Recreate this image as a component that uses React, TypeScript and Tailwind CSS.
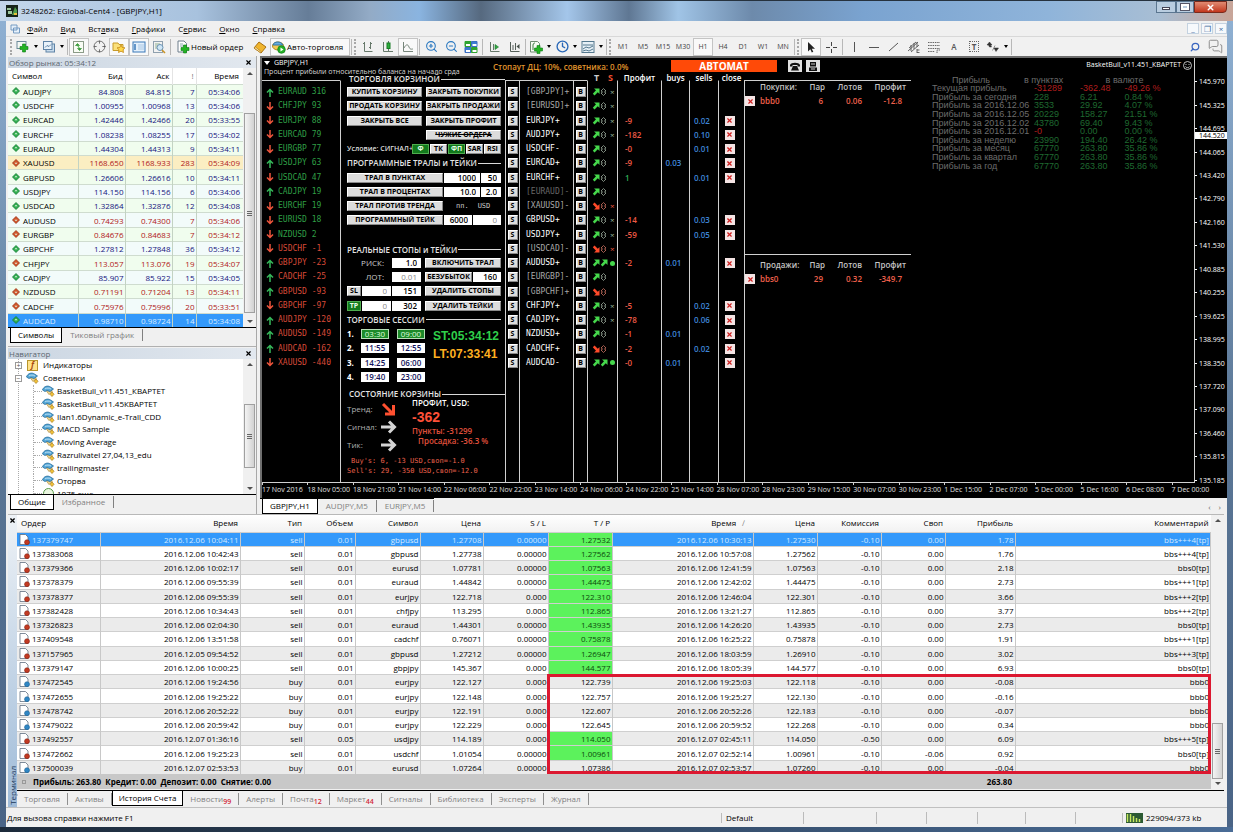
import React from 'react';
import { Search, MessagesSquare, ZoomIn, ZoomOut, Crosshair, Clock, X } from 'lucide-react';

const quotes = [
  ['AUDJPY', '84.808', '84.815', '7', '05:34:06', 'up'],
  ['USDCHF', '1.00955', '1.00968', '13', '05:34:06', 'up'],
  ['EURCAD', '1.42446', '1.42466', '20', '05:33:55', 'up'],
  ['EURCHF', '1.08238', '1.08255', '17', '05:34:02', 'up'],
  ['EURAUD', '1.44304', '1.44313', '9', '05:34:11', 'up'],
  ['XAUUSD', '1168.650', '1168.933', '283', '05:34:09', 'down'],
  ['GBPUSD', '1.26606', '1.26616', '10', '05:34:11', 'up'],
  ['USDJPY', '114.150', '114.156', '6', '05:34:06', 'up'],
  ['USDCAD', '1.32864', '1.32876', '12', '05:34:08', 'up'],
  ['AUDUSD', '0.74293', '0.74300', '7', '05:34:06', 'down'],
  ['EURGBP', '0.84676', '0.84683', '7', '05:34:12', 'down'],
  ['GBPCHF', '1.27812', '1.27848', '36', '05:34:12', 'up'],
  ['CHFJPY', '113.057', '113.076', '19', '05:34:07', 'down'],
  ['CADJPY', '85.907', '85.922', '15', '05:34:05', 'up'],
  ['NZDUSD', '0.71191', '0.71204', '13', '05:34:11', 'down'],
  ['CADCHF', '0.75976', '0.75996', '20', '05:33:51', 'down'],
  ['AUDCAD', '0.98710', '0.98724', '14', '05:34:08', 'up'],
];

const experts = [
  'BasketBull_v11.451_КВАРТЕТ',
  'BasketBull_v11.45КВАРТЕТ',
  'Ilan1.6Dynamic_e-Trall_CDD',
  'MACD Sample',
  'Moving Average',
  'Razrulivatel 27,04,13_edu',
  'trailingmaster',
  'Оторва',
];

const strength: [string, number, boolean][] = [
  ['EURAUD', 316, true],
  ['CHFJPY', 93, false],
  ['EURJPY', 88, false],
  ['EURCAD', 79, false],
  ['EURGBP', 77, false],
  ['USDJPY', 63, true],
  ['USDCAD', 47, false],
  ['CADJPY', 19, true],
  ['EURCHF', 19, false],
  ['EURUSD', 18, false],
  ['NZDUSD', 2, false],
  ['USDCHF', -1, false],
  ['GBPJPY', -23, true],
  ['CADCHF', -25, true],
  ['GBPUSD', -93, true],
  ['GBPCHF', -97, false],
  ['AUDJPY', -120, true],
  ['AUDUSD', -149, true],
  ['AUDCAD', -162, true],
  ['XAUUSD', -440, false],
];

interface Pair {
  name: string;
  up: boolean;
  sign?: 'x' | 'dot';
  profit?: string;
  buys?: string;
  sells?: string;
}

const pairs: Pair[] = [
  { name: '[GBPJPY]+', up: true, sign: 'x' },
  { name: '[EURUSD]+', up: true, sign: 'x' },
  { name: 'EURJPY+', up: true, sign: 'x', profit: '-9', sells: '0.02' },
  { name: 'AUDJPY+', up: true, sign: 'x', profit: '-182', sells: '0.10' },
  { name: 'USDCHF-', up: true, profit: '-0', sells: '0.01' },
  { name: 'EURCAD+', up: true, profit: '-9', buys: '0.03' },
  { name: 'EURCHF+', up: true, profit: '1', sells: '0.01' },
  { name: '[EURAUD]-', up: true },
  { name: '[XAUUSD]-', up: false, sign: 'x' },
  { name: 'GBPUSD+', up: true, sign: 'x', profit: '-14', sells: '0.03' },
  { name: 'USDJPY+', up: true, sign: 'x', profit: '-59', sells: '0.05' },
  { name: '[USDCAD]-', up: false, sign: 'x' },
  { name: 'AUDUSD+', up: true, sign: 'dot', profit: '-2', buys: '0.01' },
  { name: '[EURGBP]-', up: true },
  { name: '[GBPCHF]+', up: false },
  { name: 'CHFJPY+', up: true, sign: 'x', profit: '-5', sells: '0.02' },
  { name: 'CADJPY+', up: true, sign: 'x', profit: '-78', sells: '0.06' },
  { name: 'NZDUSD+', up: true, profit: '-1', buys: '0.01' },
  { name: 'CADCHF+', up: false, profit: '-2', sells: '0.02' },
  { name: 'AUDCAD-', up: true, sign: 'dot', profit: '-0', buys: '0.01' },
];

const profitRows = [
  ['Текущая прибыль', '-31289', '-362.48', '-49.26 %'],
  ['Прибыль за сегодня', '228', '6.21', '0.84 %'],
  ['Прибыль за 2016.12.06', '3533', '29.92', '4.07 %'],
  ['Прибыль за 2016.12.05', '20229', '158.27', '21.51 %'],
  ['Прибыль за 2016.12.02', '43780', '69.40', '9.43 %'],
  ['Прибыль за 2016.12.01', '-0', '0.00', '0.00 %'],
  ['Прибыль за неделю', '23990', '194.40', '26.42 %'],
  ['Прибыль за месяц', '67770', '263.80', '35.86 %'],
  ['Прибыль за квартал', '67770', '263.80', '35.86 %'],
  ['Прибыль за год', '67770', '263.80', '35.86 %'],
];

const prices = [
  '145.970', '145.325', '144.695', '144.065', '143.420', '142.790', '142.160', '141.530', '140.885',
  '140.255', '139.625', '138.995', '138.350', '137.720', '137.090', '136.460', '135.815', '135.185',
];

const times = [
  '17 Nov 2016', '18 Nov 05:00', '18 Nov 21:00', '21 Nov 14:00', '22 Nov 06:00', '22 Nov 22:00', '23 Nov 14:00',
  '24 Nov 06:00', '24 Nov 22:00', '25 Nov 14:00', '28 Nov 07:00', '28 Nov 23:00', '29 Nov 15:00', '30 Nov 07:00',
  '30 Nov 23:00', '1 Dec 15:00', '2 Dec 07:00', '5 Dec 00:00', '5 Dec 16:00', '6 Dec 08:00', '7 Dec 00:00',
];

// order, opened, type, lots, symbol, price, s/l, t/p, closed, price, commission, swap, profit, comment
const orders = [
  ['137379747', '2016.12.06 10:04:11', 'sell', '0.01', 'gbpusd', '1.27708', '0.00000', '1.27532', '2016.12.06 10:30:13', '1.27530', '-0.10', '0.00', '1.78', 'bbs+++4[tp]'],
  ['137383068', '2016.12.06 10:42:43', 'sell', '0.01', 'gbpusd', '1.27738', '0.00000', '1.27562', '2016.12.06 10:57:08', '1.27562', '-0.10', '0.00', '1.76', 'bbs+++4[tp]'],
  ['137379366', '2016.12.06 10:02:17', 'sell', '0.01', 'eurusd', '1.07781', '0.00000', '1.07563', '2016.12.06 12:41:59', '1.07563', '-0.10', '0.00', '2.18', 'bbs0[tp]'],
  ['137378379', '2016.12.06 09:55:39', 'sell', '0.01', 'euraud', '1.44842', '0.00000', '1.44475', '2016.12.06 12:42:02', '1.44475', '-0.10', '0.00', '2.73', 'bbs+++1[tp]'],
  ['137378377', '2016.12.06 09:55:39', 'sell', '0.01', 'eurjpy', '122.718', '0.000', '122.310', '2016.12.06 12:46:04', '122.301', '-0.10', '0.00', '3.66', 'bbs+++2[tp]'],
  ['137382428', '2016.12.06 10:34:43', 'sell', '0.01', 'chfjpy', '113.295', '0.000', '112.865', '2016.12.06 13:21:27', '112.865', '-0.10', '0.00', '3.77', 'bbs+++2[tp]'],
  ['137326823', '2016.12.06 02:04:30', 'sell', '0.01', 'euraud', '1.44301', '0.00000', '1.43935', '2016.12.06 14:26:20', '1.43935', '-0.10', '0.00', '2.73', 'bbs0[tp]'],
  ['137409548', '2016.12.06 13:51:58', 'sell', '0.01', 'cadchf', '0.76071', '0.00000', '0.75878', '2016.12.06 16:25:22', '0.75878', '-0.10', '0.00', '1.91', 'bbs+++1[tp]'],
  ['137157965', '2016.12.05 09:54:52', 'sell', '0.01', 'gbpusd', '1.27212', '0.00000', '1.26947', '2016.12.06 18:03:59', '1.26910', '-0.10', '0.00', '3.02', 'bbs+++3[tp]'],
  ['137379147', '2016.12.06 10:00:25', 'sell', '0.01', 'gbpjpy', '145.367', '0.000', '144.577', '2016.12.06 18:05:39', '144.577', '-0.10', '0.00', '6.93', 'bbs0[tp]'],
  ['137472545', '2016.12.06 19:24:56', 'buy', '0.01', 'eurjpy', '122.127', '0.000', '122.739', '2016.12.06 19:25:03', '122.118', '-0.10', '0.00', '-0.08', 'bbb0'],
  ['137472655', '2016.12.06 19:25:22', 'buy', '0.01', 'eurjpy', '122.148', '0.000', '122.757', '2016.12.06 19:25:27', '122.130', '-0.10', '0.00', '-0.16', 'bbb0'],
  ['137478742', '2016.12.06 20:52:22', 'buy', '0.01', 'eurjpy', '122.191', '0.000', '122.607', '2016.12.06 20:52:26', '122.183', '-0.10', '0.00', '-0.07', 'bbb0'],
  ['137479022', '2016.12.06 20:59:42', 'buy', '0.01', 'eurjpy', '122.229', '0.000', '122.645', '2016.12.06 20:59:52', '122.268', '-0.10', '0.00', '0.34', 'bbb0'],
  ['137492557', '2016.12.07 01:36:16', 'sell', '0.05', 'usdjpy', '114.189', '0.000', '114.050', '2016.12.07 02:45:11', '114.050', '-0.50', '0.00', '6.09', 'bbs+++5[tp]'],
  ['137472662', '2016.12.06 19:25:23', 'sell', '0.01', 'usdchf', '1.01054', '0.00000', '1.00961', '2016.12.07 02:52:14', '1.00961', '-0.10', '-0.06', '0.92', 'bbs0[tp]'],
  ['137500039', '2016.12.07 02:53:53', 'buy', '0.01', 'eurusd', '1.07264', '0.00000', '1.07386', '2016.12.07 02:53:57', '1.07260', '-0.10', '0.00', '-0.04', 'bbb0'],
];

const orderColumns: [string, string][] = [
  ['Ордер', 'w-[83px]'],
  ['Время', 'w-[140px]'],
  ['Тип', 'w-[64px]'],
  ['Объем', 'w-[51px]'],
  ['Символ', 'w-[65px]'],
  ['Цена', 'w-[63px]'],
  ['S / L', 'w-[65px]'],
  ['T / P', 'w-[64px]'],
  ['Время', 'w-[141px]'],
  ['Цена', 'w-[64px]'],
  ['Комиссия', 'w-[64px]'],
  ['Своп', 'w-[64px]'],
  ['Прибыль', 'w-[70px]'],
  ['Комментарий', ''],
];

/* ---------- small drawings ---------- */

const Plus = ({ x = 6, y = 6 }) => (
  <path d={`M${x + 2.5} ${y}h3v2.5h2.5v3h-2.5v2.5h-3v-2.5h-2.5v-3h2.5z`} fill="#22b422" stroke="#0c7a14" strokeWidth=".6" />
);

const Glyph: React.FC<{ name: string }> = ({ name }) => (
  <svg width="14" height="14" viewBox="0 0 14 14" fill="none" stroke="#444" strokeWidth="1" className="shrink-0">
    {name === 'newchart' && (
      <>
        <rect x="1" y="1.5" width="9" height="7" fill="#f4f8f4" stroke="#6c8a9a" />
        <Plus x={4} y={4} />
      </>
    )}
    {name === 'profiles' && (
      <>
        <rect x="4" y="4" width="8.5" height="8" fill="#c9dcec" stroke="#5f83a6" />
        <rect x="1.5" y="1.5" width="8.5" height="8" fill="#e9f2fa" stroke="#5f83a6" />
        <path d="M3 7.5l2-2 2 1 2-2" stroke="#5f83a6" />
      </>
    )}
    {name === 'watch' && (
      <>
        <rect x="1.5" y="1.5" width="10" height="11" fill="#f8fcf4" stroke="#8b9b88" />
        <path d="M3.500 5.500l2-2 2 2zM5.500 8.500l2 2 2-2z" fill="#35a235" stroke="#2a8a2a" strokeWidth=".6" />
        <path d="M5.500 5.500l2.500 3.500" stroke="#35a235" />
      </>
    )}
    {name === 'star' && (
      <>
        <path d="M1 3h5l1 1.500h4v6H1z" fill="#fbe07a" stroke="#c79a2a" />
        <path d="M9 5l1.200 2.500 2.800.3-2 1.900.5 2.800L9 11.200l-2.500 1.300.5-2.800-2-1.900 2.800-.3z" fill="#ffd84a" stroke="#c58a1a" strokeWidth=".8" />
      </>
    )}
    {name === 'terminal' && (
      <>
        <rect x="1" y="2" width="12" height="10" fill="#e4f0fb" stroke="#3a78b8" />
        <path d="M3 4v6" stroke="#3a78b8" strokeWidth="1.500" />
        <path d="M6 5h6M6 7h6M6 9h6" stroke="#a8c6e4" />
      </>
    )}
    {name === 'tester' && (
      <>
        <rect x="1.500" y="1.500" width="9" height="11" fill="#f2f2f2" stroke="#8fa0ae" />
        <path d="M3 4h5M3 6h3M3 8h3" stroke="#90b090" />
        <circle cx="8" cy="7.500" r="3" fill="#cfe6f6" stroke="#6a92b4" />
        <path d="M10 10l3 3" stroke="#c99326" strokeWidth="1.600" />
      </>
    )}
    {name === 'order' && (
      <>
        <path d="M2 1h6l2.500 2.500V12H2z" fill="#fff" stroke="#6f7f8c" />
        <path d="M4 4h3M4 6h4" stroke="#8aa" />
        <Plus x={5} y={5} />
      </>
    )}
    {name === 'book' && (
      <>
        <path d="M1 8l5-6 7 5-5 6z" fill="#f0b52d" stroke="#a8700f" />
        <path d="M1 8l7 5v-1.500L2.500 7z" fill="#fbe6a8" stroke="#a8700f" strokeWidth=".6" />
      </>
    )}
    {name === 'auto' && (
      <>
        <ellipse cx="6" cy="6" rx="5.500" ry="4" fill="#f3c952" stroke="#ae8a22" />
        <path d="M1 5c1-4 8-4 10 0z" fill="#69aee0" stroke="#2f77ad" />
        <circle cx="9.500" cy="9.500" r="3.800" fill="#25b125" stroke="#0d7d15" strokeWidth=".7" />
        <path d="M8.500 7.500l3 2-3 2z" fill="#fff" stroke="none" />
      </>
    )}
    {name === 'bars' && <path d="M3.500 2v9.500h8M2 3.500h1.500M9.500 2v7M8 7.500h1.500M9.500 3.500H11" stroke="#66786a" />}
    {name === 'candles' && (
      <>
        <path d="M2.500 2v9.500h9.500M7.500 1v10" stroke="#66786a" />
        <rect x="6" y="3" width="3" height="5.500" fill="#2eae3c" stroke="#177d25" />
      </>
    )}
    {name === 'line' && <path d="M2.500 2v9.500h9.500M3 8c2-4 4-4 5-1s3 2 4 2" stroke="#76857a" />}
    {name === 'tile' && (
      <>
        <path d="M1 1.500h6v5H1z" fill="#2ea32e" stroke="#2ea32e" />
        <path d="M7.500 1.500h5.500v5H7.500zM1 7.500h6v5H1z" fill="#3b7cd0" stroke="#3b6cc0" />
        <path d="M7.500 7.500h5.500v5H7.500z" fill="#2ea32e" stroke="#2ea32e" />
        <path d="M2 4h4v2H2zM8.500 4h4v2h-4zM2 10h4v2H2zM8.500 10h4v2h-4z" fill="#fff" stroke="none" />
      </>
    )}
    {name === 'scroll' && (
      <>
        <path d="M3.500 2v9.500h9M6.500 4v6" stroke="#66786a" />
        <path d="M8 4.500l3.500 2.500L8 9.500z" fill="#35a845" stroke="#1a7a2a" strokeWidth=".6" />
      </>
    )}
    {name === 'shift' && (
      <>
        <path d="M3.500 2v9.500h9M8.500 3v7M6 5v5" stroke="#545f58" />
        <path d="M12.500 4v5L9.500 6.500z" fill="#444f48" stroke="none" />
      </>
    )}
    {name === 'indicator' && (
      <>
        <path d="M1.500 1.500h7l2 2V12h-9z" fill="#f6fbf4" stroke="#6d8b70" />
        <path d="M4 10V5c0-2 2-2 2-2" stroke="#3a7a3f" />
        <Plus x={5.5} y={5.5} />
      </>
    )}
    {name === 'template' && (
      <>
        <rect x="1" y="1.500" width="12" height="11" fill="#e6f0f6" stroke="#54788e" />
        <path d="M2 5h10M2 9l3-2 3 1 4-2M2 11l3-1 3 1 4-2" stroke="#54788e" />
      </>
    )}
    {name === 'cursor' && <path d="M4 2v9.500l2.300-2.200 1.500 3.200 1.500-.7-1.500-3.100H11z" fill="#222" stroke="none" />}
    {name === 'cross' && <path d="M7.500 2v4M7.500 9v4M2 7.500h4M9 7.500h4" stroke="#444" />}
    {name === 'vline' && <path d="M7.500 2v10" stroke="#555" />}
    {name === 'hline' && <path d="M2 7.500h10" stroke="#555" />}
    {name === 'trend' && <path d="M2 11l9-8" stroke="#555" />}
    {name === 'channel' && <path d="M1 11l10-9M2 8l7-6M4 12l8-7M4 5v6M7 3v6M10 2v5M10 10h2.500M10 12.500h2.500M10 9v4" stroke="#555" strokeWidth=".9" />}
    {name === 'fibo' && <path d="M1 2.500h12M1 5.500h12M1 8.500h12M1 11.500h7M10 13v-3h3" stroke="#666" strokeDasharray="1.500 .8" />}
    {name === 'arrows' && (
      <path d="M1 5l2.500-3L6 5H4.500l1 2h-2l-1-2zM8 8h4.500L10 11.500zM6.500 10.500l2.500-5" fill="#333" stroke="#333" strokeWidth=".5" />
    )}
  </svg>
);

const Logo = () => (
  <svg width="12" height="12" viewBox="0 0 12 12" className="shrink-0">
    <rect width="12" height="12" fill="#16241a" />
    <path d="M1 3h4v2H1zM2 6h4v3H2z" fill="#9ec79e" />
    <path d="M6 10l3-8 2 3v5z" fill="#4f9c4a" />
    <path d="M8 8h3v2H8z" fill="#e8c23c" />
  </svg>
);

const QuoteArrow = ({ up }: { up: boolean }) => (
  <svg width="8" height="8" viewBox="0 0 8 8" className="shrink-0">
    <path d="M4 .5L7.500 4 4 7.500.5 4z" fill={up ? '#2fae4f' : '#d2542a'} stroke={up ? '#117a30' : '#9a3010'} strokeWidth=".8" />
    <path d={up ? 'M4 2.800l1.500 1.500h-3z' : 'M4 5.200l1.500-1.500h-3z'} fill="#dff5df" />
  </svg>
);

const ExpertIcon = () => (
  <svg width="13" height="12" viewBox="0 0 13 12" className="shrink-0">
    <path d="M4 5.500l3 4 3.500-3.500z" fill="#f0d48c" stroke="#a98530" strokeWidth=".6" />
    <path d="M.5 5C1.500 1.500 5.500 0 8.500 2L11.500 4l-3.500 2.500-3-1L3 6.500z" fill="#58a9d8" stroke="#246c9c" strokeWidth=".8" />
    <path d="M3 3.800c2-1 4-1 6 .2" stroke="#cfe8f8" strokeWidth=".8" fill="none" />
    <path d="M10 7l2 2.300-2 2.200-2-2.200z" fill="#f2c338" stroke="#a57714" strokeWidth=".7" />
  </svg>
);

const DocIcon = ({ sell }: { sell: boolean }) => (
  <svg width="11" height="11" viewBox="0 0 11 11" className="shrink-0">
    <path d="M1 .5h5.500L9 3v7.500H1z" fill="#fff" stroke="#5f6f80" strokeWidth=".8" />
    <circle cx="8" cy="8.200" r="2.500" fill={sell ? '#c23a22' : '#2f86c4'} stroke={sell ? '#7c1c0e' : '#175a8c'} strokeWidth=".5" />
  </svg>
);

const StrengthArrow = ({ up }: { up: boolean }) => (
  <svg width="8" height="9" viewBox="0 0 8 9" fill="none" strokeWidth="1.500" className="shrink-0">
    {up ? <path d="M4 9V1.500M1 4.500l3-3 3 3" stroke="#36b85a" /> : <path d="M4 0v7.500M1 4.500l3 3 3-3" stroke="#f0553c" />}
  </svg>
);

const TrendArrow = ({ up }: { up: boolean }) => (
  <svg width="8" height="8" viewBox="0 0 8 8" className="shrink-0">
    {up ? <path d="M2 .5h5.500V6L5.800 4.300 2.500 7.500.8 5.800 4 2.300z" fill="#46d84c" /> : <path d="M2 7.500h5.500V2L5.800 3.700 2.500.5.8 2.200 4 5.700z" fill="#ff4a2a" />}
  </svg>
);

const BlockArrow = ({ color, down }: { color: string; down?: boolean }) => (
  <svg width="16" height="16" viewBox="0 0 16 16" fill="none" stroke={color} strokeWidth="3">
    {down ? <path d="M2 3l9 9M12.500 4v9H4" /> : <path d="M0 8h13M8 2.500L13.500 8 8 13.500" />}
  </svg>
);

/* ---------- shared controls ---------- */

const Sep = () => <span className="mx-px h-4 w-px shrink-0 bg-[#b8b8b8]" />;

const Grip = () => <span className="mx-px h-4 w-[3px] shrink-0 border-l-2 border-dotted border-[#a8a8a8]" />;

const Tool: React.FC<{ label: string; active?: boolean; caret?: boolean; children: React.ReactNode }> = ({ label, active, caret, children }) => (
  <button
    aria-label={label}
    className={`flex h-[18px] shrink-0 items-center justify-center ${caret ? 'w-[26px] gap-1' : 'w-5'} ${active ? 'border border-[#c4c4c4] bg-[#f9f9f9]' : ''}`}
  >
    {children}
    {caret && <span className="border-x-[2px] border-t-[3px] border-x-transparent border-t-black" />}
  </button>
);

const PanelTitle = ({ children }: { children: React.ReactNode }) => (
  <div className="flex h-[11px] items-center justify-between bg-linear-to-r from-[#cbd6e2] to-[#e2e8ef] pr-1 pl-px text-[#5c6670]">
    <h2>{children}</h2>
    <button aria-label="Закрыть" className="text-black">
      <X size={7} strokeWidth={4} />
    </button>
  </div>
);

const ScrollBar = ({ thumb }: { thumb: string }) => (
  <div className="flex w-[13px] shrink-0 flex-col items-center bg-[#f0f0f0]">
    <span className="mt-1 border-x-[3px] border-b-[3px] border-x-transparent border-b-[#505050]" />
    <span className={`flex w-[11px] flex-col items-center justify-center gap-px border border-[#a0a0a0] bg-linear-to-r from-[#f4f4f4] to-[#d2d2d2] ${thumb}`}>
      <i className="h-px w-[5px] bg-[#666]" />
      <i className="h-px w-[5px] bg-[#666]" />
      <i className="h-px w-[5px] bg-[#666]" />
    </span>
    <span className="mt-auto mb-1 border-x-[3px] border-t-[3px] border-x-transparent border-t-[#505050]" />
  </div>
);

const Tabs: React.FC<{ items: string[]; active: number }> = ({ items, active }) => (
  <div className="flex h-4 items-start border-t border-black text-[#808080]">
    {items.map((item, i) => (
      <button
        key={item}
        className={i === active ? 'ml-0.5 h-[15px] border-x border-b border-black bg-white px-[7px] text-black' : 'mt-px h-3 border-r border-[#808080] px-2'}
      >
        {item}
      </button>
    ))}
  </div>
);

const Key: React.FC<{ children: React.ReactNode; on?: boolean; className?: string }> = ({ children, on, className = '' }) => (
  <button
    className={`flex h-2.5 items-center justify-center overflow-hidden border text-[7px] leading-[8px] font-bold whitespace-nowrap ${
      on ? 'border-[#4fae4f] bg-[#127a1c] text-[#e8ffe8]' : 'border-t-white border-r-[#8a8a8a] border-b-[#8a8a8a] border-l-white bg-[#dcdcdc] text-black'
    } ${className}`}
  >
    {children}
  </button>
);

const fieldTones = {
  black: 'bg-white px-1 text-right font-semibold text-black',
  grey: 'bg-white px-1 text-right text-[#888]',
  navy: 'bg-white text-center font-semibold text-[#14145c]',
  green: 'border border-[#b8e0b8] bg-[#1d8a2a] text-center text-[#dfffdf]',
};

const Field: React.FC<{ label: string; value: string; tone?: keyof typeof fieldTones; className: string }> = ({ label, value, tone = 'black', className }) => (
  <input aria-label={label} defaultValue={value} className={`h-2.5 min-w-0 text-[8px] leading-[10px] ${fieldTones[tone]} ${className}`} />
);

const SectionTitle = ({ children }: { children: React.ReactNode }) => (
  <h3 className="flex h-3 items-center gap-px text-[8px] font-semibold whitespace-nowrap text-[#e4e4e4]">
    {children}
    <span className="h-px flex-1 bg-[#d8d8d8]" />
  </h3>
);

const Column: React.FC<{ title?: string; className: string; children: React.ReactNode }> = ({ title, className, children }) => (
  <div className={`shrink-0 border-t border-l border-l-[#d0d0d0] ${className}`}>
    <h3 className="-mt-2 flex h-3 justify-center font-semibold whitespace-nowrap">
      {title && <span className="bg-black px-px">{title}</span>}
    </h3>
    <div className="grid h-[285px] grid-rows-[repeat(20,1fr)] items-center justify-items-center">{children}</div>
  </div>
);

const CloseKey = () => (
  <button aria-label="Закрыть" className="flex size-2.5 items-center justify-center bg-[#f4e4e4] text-[#d02020]">
    <X size={7} strokeWidth={4} />
  </button>
);

/* ---------- window parts ---------- */

const TitleBar = () => (
  <header className="flex h-[21px] items-center border-t border-[#26323e] bg-linear-[90deg,#c3d6ea_0%,#a8c2de_16%,#667d98_25%,#93abc6_30%,#8ab4e0_34%,#56697f_39%,#a4c6ea_46%,#5f7793_51%,#a0c4e6_55%,#6d8aab_61%,#7aa3d0_70%,#8fb4da_85%,#a8bed4_94%,#c8a598_100%] pl-1.5">
    <Logo />
    <h1 className="ml-[3px] text-black">3248262: EGlobal-Cent4 - [GBPJPY,H1]</h1>
    <div className="mr-1.5 ml-auto flex h-3 self-start">
      <button aria-label="Свернуть" className="flex w-5 items-end justify-center border border-[#5b7690] bg-[#b9cde0] pb-0.5">
        <i className="h-[3px] w-2 border border-[#445] bg-white" />
      </button>
      <button aria-label="Развернуть" className="flex w-[18px] items-center justify-center border border-[#5b7690] bg-[#b9cde0]">
        <i className="h-[6px] w-2 border-2 border-white outline outline-[#556]" />
      </button>
      <button aria-label="Закрыть окно" className="flex w-[33px] items-center justify-center rounded-br border border-[#7a2a1c] bg-linear-to-b from-[#e08a72] to-[#c2341a] text-white">
        <X size={9} strokeWidth={4} />
      </button>
    </div>
  </header>
);

const MenuBar = () => (
  <nav className="flex h-[15px] items-center gap-[13px] bg-[#f0f0f0] pl-1">
    <svg width="10" height="10" viewBox="0 0 10 10" fill="#e6f0fa" stroke="#6a92bc" strokeWidth=".9">
      <path d="M1 1h6v5H1zM3.500 4h6v5h-6z" />
    </svg>
    {['Файл', 'Вид', 'Вставка', 'Графики', 'Сервис', 'Окно', 'Справка'].map((item, i) => (
      <button key={item} className={i === 0 ? '-ml-1.5' : ''}>
        {item === 'Вставка' || item === 'Сервис' ? (
          <>{item.slice(0, item === 'Вставка' ? 3 : 1)}<u>{item === 'Вставка' ? 'а' : 'е'}</u>{item.slice(item === 'Вставка' ? 4 : 2)}</>
        ) : (
          <><u>{item[0]}</u>{item.slice(1)}</>
        )}
      </button>
    ))}
    <div className="ml-auto flex h-[11px] gap-0.5 text-[#3a6a9c]">
      {['_', '❐', '×'].map((sign) => (
        <button key={sign} aria-label={sign} className="flex w-3 items-center justify-center border border-[#c4d2e0] bg-[#f6f9fc] text-[8px] leading-none">
          {sign}
        </button>
      ))}
    </div>
  </nav>
);

const Toolbar = () => (
  <div className="flex h-5 items-center border-t border-[#d8d8d8] bg-[#f1f1f1] pl-[3px]">
    <Grip />
    <Tool label="Новый график" caret><Glyph name="newchart" /></Tool>
    <Tool label="Профили" caret><Glyph name="profiles" /></Tool>
    <Sep />
    <Tool label="Обзор рынка" active><Glyph name="watch" /></Tool>
    <Tool label="Окно данных"><Crosshair size={13} strokeWidth={1.5} color="#555" /></Tool>
    <Tool label="Навигатор" active><Glyph name="star" /></Tool>
    <Tool label="Терминал" active><Glyph name="terminal" /></Tool>
    <Tool label="Тестер"><Glyph name="tester" /></Tool>
    <Sep />
    <button className="mx-1 flex h-[18px] w-[70px] items-center gap-px whitespace-nowrap">
      <Glyph name="order" />
      Новый ордер
    </button>
    <Tool label="Редактор"><Glyph name="book" /></Tool>
    <button className="flex h-[18px] w-20 items-center gap-px border border-[#c4c4c4] bg-[#f9f9f9] pl-px whitespace-nowrap">
      <Glyph name="auto" />
      Авто-торговля
    </button>
    <Sep />
    <Grip />
    <Tool label="Бары"><Glyph name="bars" /></Tool>
    <Tool label="Свечи"><Glyph name="candles" /></Tool>
    <Tool label="Линия" active><Glyph name="line" /></Tool>
    <Sep />
    <Tool label="Приблизить"><ZoomIn size={13} color="#2a78c0" /></Tool>
    <Tool label="Отдалить"><ZoomOut size={13} color="#2a78c0" /></Tool>
    <Tool label="Расположить окна"><Glyph name="tile" /></Tool>
    <Sep />
    <Tool label="Автопрокрутка"><Glyph name="scroll" /></Tool>
    <Tool label="Сдвиг графика"><Glyph name="shift" /></Tool>
    <Sep />
    <Tool label="Индикаторы" caret><Glyph name="indicator" /></Tool>
    <Tool label="Периоды" caret><Clock size={13} strokeWidth={2.5} color="#2a68b8" /></Tool>
    <Tool label="Шаблоны" caret><Glyph name="template" /></Tool>
    <Sep />
    <Grip />
    {['M1', 'M5', 'M15', 'M30', 'H1', 'H4', 'D1', 'W1', 'MN'].map((tf) => (
      <Tool key={tf} label={tf} active={tf === 'H1'}>
        <span className="text-[7px] text-[#444]">{tf}</span>
      </Tool>
    ))}
    <Sep />
    <Grip />
    <Tool label="Курсор" active><Glyph name="cursor" /></Tool>
    <Tool label="Перекрестие"><Glyph name="cross" /></Tool>
    <Sep />
    <Tool label="Вертикальная линия"><Glyph name="vline" /></Tool>
    <Tool label="Горизонтальная линия"><Glyph name="hline" /></Tool>
    <Tool label="Трендовая линия"><Glyph name="trend" /></Tool>
    <Tool label="Канал"><Glyph name="channel" /></Tool>
    <Tool label="Фибоначчи"><Glyph name="fibo" /></Tool>
    <Tool label="Текст"><span className="text-[8px] font-semibold text-[#555]">A</span></Tool>
    <Tool label="Метка"><span className="border border-dotted border-[#666] px-0.5 text-[8px] leading-[9px] font-bold text-[#555]">T</span></Tool>
    <Tool label="Стрелки" caret><Glyph name="arrows" /></Tool>
    <Sep />
    <div className="mr-1 ml-auto flex items-center gap-2">
      <button aria-label="Поиск"><Search size={10} strokeWidth={3} color="#3a66c0" className="-scale-x-100" /></button>
      <button aria-label="Чат"><MessagesSquare size={15} strokeWidth={1.5} color="#888" /></button>
    </div>
  </div>
);

const MarketWatch = () => (
  <section className="h-[290px] border-b border-[#b0b0b0]">
    <PanelTitle>Обзор рынка: 05:34:12</PanelTitle>
    <div className="flex bg-white">
      <table className="h-[259px] flex-1 table-fixed border-collapse">
        <thead>
          <tr className="h-4">
            <th className="w-[70px] pl-1 text-left font-normal">Символ</th>
            <th className="w-[47px] border-x border-[#e4e4e4] pr-0.5 text-right font-normal">Бид</th>
            <th className="w-[47px] border-x border-[#e4e4e4] pr-0.5 text-right font-normal">Аск</th>
            <th className="w-6 border-x border-[#e4e4e4] pr-0.5 text-right font-normal text-[#777]">!</th>
            <th className="w-[47px] pr-1 text-right font-normal">Время</th>
          </tr>
        </thead>
        <tbody>
          {quotes.map(([symbol, bid, ask, spread, time, dir], i) => {
            const selected = symbol === 'AUDCAD';
            const tone = selected ? 'text-[#d8ecff]' : dir === 'up' ? 'text-[#14147e]' : 'text-[#b02020]';
            const bg = selected ? 'bg-[#3399fb]' : symbol === 'XAUUSD' ? 'bg-[#fbeec2]' : i % 2 ? 'bg-[#f2fbfa]' : 'bg-[#f0fdee]';
            return (
              <tr key={symbol} className={`${bg} ${tone} border-t border-[#cfdccf] text-right leading-[9px]`}>
                <td>
                  <span className={`flex items-center gap-[3px] pl-1 ${selected ? 'text-[#d8ecff]' : 'text-black'}`}>
                    <QuoteArrow up={dir === 'up'} />
                    {symbol}
                  </span>
                </td>
                <td className="border-x border-[#c3d3c3] pr-px">{bid}</td>
                <td className="border-x border-[#c3d3c3] pr-px">{ask}</td>
                <td className="border-x border-[#c3d3c3] pr-px">{spread}</td>
                <td className="pr-[3px]">{time}</td>
              </tr>
            );
          })}
        </tbody>
      </table>
      <ScrollBar thumb="mt-[38px] h-[200px]" />
    </div>
    <Tabs items={['Символы', 'Тиковый график']} active={0} />
  </section>
);

const Navigator = () => (
  <section className="mt-px">
    <PanelTitle>Навигатор</PanelTitle>
    <div className="flex h-[135px] overflow-hidden bg-white">
      <ul className="ml-2.5 grid h-[141px] flex-1 grid-rows-[repeat(11,1fr)] border-l border-dotted border-[#aaa]">
        <li className="-ml-1 flex items-center gap-1">
          <span className="flex size-[7px] items-center justify-center border border-[#999] bg-white text-[7px] leading-none text-[#555]">+</span>
          <span className="mx-px flex size-[11px] items-center justify-center border border-[#b8952c] bg-[#ffe28a] text-[8px] leading-none font-bold text-[#a84a10] italic">f</span>
          Индикаторы
        </li>
        <li className="-ml-1 flex items-center gap-1">
          <span className="flex size-[7px] items-center justify-center border border-[#999] bg-white text-[7px] leading-none text-[#555]">−</span>
          <ExpertIcon />
          Советники
        </li>
        {experts.map((name) => (
          <li key={name} className="ml-3.5 flex items-center border-l border-dotted border-[#aaa]">
            <span className="w-2 border-t border-dotted border-[#aaa]" />
            <ExpertIcon />
            <span className="ml-0.5">{name}</span>
          </li>
        ))}
        <li className="ml-3.5 flex items-center border-l border-dotted border-[#aaa]">
          <span className="w-2 border-t border-dotted border-[#aaa]" />
          <span className="mr-[3px] ml-px size-[11px] rounded-full border border-[#5a9a4a] bg-[#eaf6e0]" />
          1075 еще...
        </li>
      </ul>
      <ScrollBar thumb="mt-[38px] h-16" />
    </div>
    <Tabs items={['Общие', 'Избранное']} active={0} />
  </section>
);

const ControlPanel = () => (
  <div className="w-[165px] shrink-0 border-t border-l border-t-black border-l-[#d0d0d0] pl-1.5">
    <div className="-mt-2 pl-0.5">
      <SectionTitle>ТОРГОВЛЯ КОРЗИНОЙ</SectionTitle>
    </div>
    <div className="grid h-[299px] w-[154px] grid-rows-[repeat(21,1fr)] items-center">
      <div className="grid grid-cols-2 gap-1"><Key>КУПИТЬ КОРЗИНУ</Key><Key>ЗАКРЫТЬ ПОКУПКИ</Key></div>
      <div className="grid grid-cols-2 gap-1"><Key>ПРОДАТЬ КОРЗИНУ</Key><Key>ЗАКРЫТЬ ПРОДАЖИ</Key></div>
      <div className="grid grid-cols-2 gap-1"><Key>ЗАКРЫТЬ ВСЕ</Key><Key>ЗАКРЫТЬ ПРОФИТ</Key></div>
      <div className="grid grid-cols-2 gap-1"><Key className="col-start-2 line-through">ЧУЖИЕ ОРДЕРА</Key></div>
      <div className="flex items-center gap-px text-[7px] font-semibold whitespace-nowrap text-[#ddd]">
        <span className="w-16">Условие: СИГНАЛ+</span>
        <Key on className="w-[17px]">Ф</Key>
        <Key className="w-[17px]">ТК</Key>
        <Key on className="w-[17px]">ФП</Key>
        <Key className="w-[17px]">SAR</Key>
        <Key className="w-[17px]">RSI</Key>
      </div>
      <SectionTitle>ПРОГРАММНЫЕ ТРАЛЫ и ТЕЙКИ</SectionTitle>
      <div className="flex gap-px">
        <Key className="w-24">ТРАЛ В ПУНКТАХ</Key>
        <Field label="Пункты" value="1000" className="w-9" />
        <Field label="Шаг" value="50" className="w-5" />
      </div>
      <div className="flex gap-px">
        <Key className="w-24">ТРАЛ В ПРОЦЕНТАХ</Key>
        <Field label="Проценты" value="10.0" className="w-9" />
        <Field label="Шаг в процентах" value="2.0" className="w-5" />
      </div>
      <div className="flex items-center gap-px text-[7px] text-[#ccc]">
        <Key className="w-24">ТРАЛ ПРОТИВ ТРЕНДА</Key>
        <span className="ml-3 font-['DejaVu_Sans_Mono']">пп.</span>
        <span className="ml-2 font-['DejaVu_Sans_Mono']">USD</span>
      </div>
      <div className="flex gap-px">
        <Key className="w-24">ПРОГРАММНЫЙ ТЕЙК</Key>
        <Field label="Тейк, пп." value="6000" className="w-7" />
        <Field label="Тейк, USD" value="0" tone="grey" className="w-7" />
      </div>
      <div className="row-span-2 self-end">
        <SectionTitle>РЕАЛЬНЫЕ СТОПЫ и ТЕЙКИ</SectionTitle>
      </div>
      <div className="flex items-center gap-1">
        <span className="w-[41px] pr-1 text-right text-[#ccc]">РИСК:</span>
        <Field label="Риск" value="1.0" className="w-[29px]" />
        <Key className="flex-1">ВКЛЮЧИТЬ ТРАЛ</Key>
      </div>
      <div className="flex items-center gap-1">
        <span className="w-[41px] pr-1 text-right text-[#ccc]">ЛОТ:</span>
        <Field label="Лот" value="0.01" tone="grey" className="w-[29px]" />
        <div className="flex flex-1 gap-px">
          <Key className="w-[47px]">БЕЗУБЫТОК</Key>
          <Field label="Безубыток" value="160" className="w-7" />
        </div>
      </div>
      <div className="flex gap-px">
        <Key className="w-3.5">SL</Key>
        <Field label="SL" value="0" tone="grey" className="w-[29px]" />
        <Field label="SL, пп." value="151" className="mr-[3px] w-[29px]" />
        <Key className="flex-1">УДАЛИТЬ СТОПЫ</Key>
      </div>
      <div className="flex gap-px">
        <Key on className="w-3.5">TP</Key>
        <Field label="TP" value="0" tone="grey" className="w-[29px]" />
        <Field label="TP, пп." value="302" className="mr-[3px] w-[29px]" />
        <Key className="flex-1">УДАЛИТЬ ТЕЙКИ</Key>
      </div>
      <SectionTitle>ТОРГОВЫЕ СЕССИИ</SectionTitle>
      <div className="row-span-4 flex h-full">
        <div className="grid w-20 grid-rows-4 items-center">
          {[['03:30', '09:00'], ['11:55', '12:55'], ['14:25', '06:00'], ['19:40', '23:00']].map(([from, to], i) => (
            <div key={from} className="flex items-center gap-2">
              <span className="w-1.5 font-bold text-white">{i + 1}.</span>
              <Field label={`Начало сессии ${i + 1}`} value={from} tone={i === 0 ? 'green' : 'navy'} className="w-7" />
              <Field label={`Конец сессии ${i + 1}`} value={to} tone={i === 0 ? 'green' : 'navy'} className="w-7" />
            </div>
          ))}
        </div>
        <div className="ml-1.5 font-['Liberation_Sans'] text-[12px] leading-[18px] font-bold">
          <p className="text-[#2fd04a]">ST:05:34:12</p>
          <p className="text-[#ffb020]">LT:07:33:41</p>
        </div>
      </div>
    </div>
    <div className="mt-1 pl-0.5">
      <SectionTitle>СОСТОЯНИЕ КОРЗИНЫ</SectionTitle>
    </div>
    <div className="flex">
      <dl className="grid h-[54px] w-[65px] grid-cols-[34px_1fr] grid-rows-3 items-center text-[#b0b0b0]">
        <dt>Тренд:</dt><dd><BlockArrow color="#ff5030" down /></dd>
        <dt>Сигнал:</dt><dd><BlockArrow color="#d4d4d4" /></dd>
        <dt>Тик:</dt><dd><BlockArrow color="#d4d4d4" /></dd>
      </dl>
      <div className="-mt-0.5 whitespace-nowrap">
        <p className="font-semibold text-white">ПРОФИТ, USD:</p>
        <p className="font-['Liberation_Sans'] text-[14px] leading-[18px] font-bold text-[#ff5038]">-362</p>
        <p className="font-semibold text-[#e0503c]">Пункты: -31299</p>
        <p className="pl-1.5 font-semibold text-[#e0503c]">Просадка: -36.3 %</p>
      </div>
    </div>
    <div className="mt-0.5 font-['DejaVu_Sans_Mono'] text-[7px] leading-[10px] text-[#e8604c]">
      <p className="pl-1">Buy's: 6, -13 USD,своп=-1.0</p>
      <p>Sell's: 29, -350 USD,своп=-12.0</p>
    </div>
  </div>
);

const Basket: React.FC<{ title: string; row: string[]; className: string }> = ({ title, row, className }) => (
  <div className={`border-t border-[#d0d0d0] ${className}`}>
    <table className="w-[161px] table-fixed border-collapse text-right">
      <thead>
        <tr className="h-3 text-[#c4c4c4]">
          <th className="w-[15px]" />
          <th className="w-[38px] text-left font-semibold">{title}</th>
          <th className="w-[27px] font-semibold">Пар</th>
          <th className="w-[37px] font-semibold">Лотов</th>
          <th className="font-semibold">Профит</th>
        </tr>
      </thead>
      <tbody>
        <tr className="h-4 font-semibold text-[#f0604c]">
          <td><CloseKey /></td>
          <td className="text-left">{row[0]}</td>
          <td className="pr-0.5">{row[1]}</td>
          <td>{row[2]}</td>
          <td className="pr-1">{row[3]}</td>
        </tr>
      </tbody>
    </table>
  </div>
);

const ProfitTable = () => (
  <table className="ml-[21px] h-[94px] w-[237px] table-fixed border-collapse self-start font-['Liberation_Sans'] text-[9px] leading-[8px] text-[#6c6c6c]">
    <thead>
      <tr>
        <th className="w-[102px] pr-6 text-center font-normal">Прибыль</th>
        <th className="w-[46px] text-left font-normal whitespace-nowrap"><span className="-ml-2.5">в пунктах</span></th>
        <th colSpan={2} className="text-center font-normal">в валюте</th>
      </tr>
    </thead>
    <tbody>
      {profitRows.map(([label, points, money, percent], i) => (
        <tr key={label} className={i === 0 ? 'text-[#b01e1e]' : 'text-[#1f6a30]'}>
          <td className="whitespace-nowrap text-[#6c6c6c]">{label}</td>
          <td className={points === '-0' ? 'text-[#b01e1e]' : ''}>{points}</td>
          <td className="w-[54px]">{money}</td>
          <td>{percent}</td>
        </tr>
      ))}
    </tbody>
  </table>
);

const Chart = () => (
  <section className="flex h-[442px] border-t-2 border-l-2 border-[#6e6e6e] bg-black text-white">
    <div className="flex min-w-0 flex-1 flex-col">
      <div className="flex flex-1 flex-col border-r border-b border-[#d0d0d0]">
        <div className="flex h-[22px] shrink-0 pl-0.5 whitespace-nowrap">
          <div className="w-[229px]">
            <p className="flex items-center gap-1 text-[7px] leading-[9px]">
              <span className="border-x-[3px] border-t-[4px] border-x-transparent border-t-white" />
              GBPJPY,H1
            </p>
            <p className="text-[7px] leading-[9px] text-[#d8d8d8]">Процент прибыли относительно баланса на начало срда</p>
          </div>
          <p className="w-[178px] pt-1 font-semibold text-[#e0952c]">Стопаут ДЦ: 10%, советника: 0.0%</p>
          <button className="mt-0.5 h-3 w-[106px] bg-[#ff4a08] text-[10px] leading-3 font-bold">АВТОМАТ</button>
          <button aria-label="Телефон" className="mt-0.5 ml-[11px] flex h-3 w-3.5 items-center justify-center bg-[#e0e0e0]">
            <svg width="10" height="9" viewBox="0 0 10 9"><path d="M0 3C1 0 9 0 10 3v1.500H7.500V3h-5v1.500H0zM3 4h4l2 4.500H1z" fill="#111" /></svg>
          </button>
          <button aria-label="Экран" className="mt-0.5 ml-1 flex h-3 w-3.5 items-center justify-center bg-[#e0e0e0]">
            <svg width="8" height="9" viewBox="0 0 8 9"><path d="M1 0h6v4.500H1zM0 5.500h8V9H0z" fill="#111" /><path d="M2 2h4M2 7h4" stroke="#ccc" /></svg>
          </button>
          <p className="mr-0.5 ml-auto flex items-center self-start pt-0.5 text-[7px] leading-[10px]">
            BasketBull_v11.451_КВАРТЕТ
            <svg width="9" height="9" viewBox="0 0 9 9" fill="none" stroke="#eee" strokeWidth=".8" className="ml-0.5">
              <circle cx="4.500" cy="4.500" r="4" /><path d="M2.500 5.500c1 1.500 3 1.500 4 0M3 3v1M6 3v1" />
            </svg>
          </p>
        </div>
        <div className="flex flex-1">
          <div className="w-[78px] shrink-0 border-t border-[#d0d0d0] pt-1">
            <ul className="grid h-[285px] grid-rows-[repeat(20,1fr)] items-center pl-1 font-['DejaVu_Sans_Mono']">
              {strength.map(([symbol, value, up]) => (
                <li key={symbol} className={`flex items-center gap-1 whitespace-pre ${value > 0 ? 'text-[#2f9e45]' : 'text-[#d64a38]'}`}>
                  <StrengthArrow up={up} />
                  {symbol} {value}
                </li>
              ))}
            </ul>
          </div>
          <ControlPanel />
          <Column className="w-3.5 border-t-[#d0d0d0]">
            {pairs.map((p) => <Key key={p.name} className="w-2.5">S</Key>)}
          </Column>
          <Column className="w-[54px] border-t-[#d0d0d0]">
            {pairs.map((p) => (
              <span
                key={p.name}
                className={`ml-1.5 justify-self-start font-['DejaVu_Sans_Mono'] ${p.name === '[EURAUD]-' ? 'text-[#666]' : p.name[0] === '[' ? 'text-[#a8a8a8]' : 'text-white'}`}
              >
                {p.name}
              </span>
            ))}
          </Column>
          <Column className="w-3.5 border-t-[#d0d0d0]">
            {pairs.map((p) => <Key key={p.name} className="w-2.5">B</Key>)}
          </Column>
          <div className="w-[30px] shrink-0 border-t border-l border-t-black border-l-[#d0d0d0]">
            <h3 className="-mt-2 flex h-3 justify-between pr-1 pl-1.5 text-[9px] font-bold">
              <span className="text-[#ccc]">T</span>
              <span className="text-[#f05030]">S</span>
            </h3>
            <div className="grid h-[285px] grid-rows-[repeat(20,1fr)] items-center pl-1">
              {pairs.map((p) => (
                <span key={p.name} className="flex h-2 items-center text-[8px]">
                  <TrendArrow up={p.up} />
                  {p.sign === 'dot' ? (
                    <TrendArrow up />
                  ) : (
                    <svg width="7" height="8" viewBox="0 0 7 8" fill="none" stroke={p.up ? '#9aa89a' : '#c87060'} strokeWidth=".8">
                      <path d="M3.500.5L6 3H5v2h1L3.500 7.500 1 5h1V3H1z" />
                    </svg>
                  )}
                  {p.sign === 'x' && <span className={`ml-[3px] ${p.up ? 'text-[#9ab89a]' : 'text-[#f05a40]'}`}>×</span>}
                  {p.sign === 'dot' && <i className="ml-0.5 size-[5px] rounded-full bg-[#46d84c]" />}
                </span>
              ))}
            </div>
          </div>
          <Column title="Профит" className="w-11 border-t-black">
            {pairs.map((p) => (
              <span key={p.name} className={`ml-[7px] justify-self-start font-semibold ${p.profit === '1' ? 'text-[#2fae55]' : 'text-[#ee5a46]'}`}>{p.profit}</span>
            ))}
          </Column>
          <Column title="buys" className="w-7 border-t-black">
            {pairs.map((p) => <span key={p.name} className="mr-1 font-semibold text-[#3f86d8]">{p.buys}</span>)}
          </Column>
          <Column title="sells" className="w-[29px] border-t-black">
            {pairs.map((p) => <span key={p.name} className="mr-1 font-semibold text-[#3f86d8]">{p.sells}</span>)}
          </Column>
          <Column title="close" className="w-[26px] border-t-black">
            {pairs.map((p) => (p.profit ? <span key={p.name} className="mr-1"><CloseKey /></span> : <span key={p.name} />))}
          </Column>
          <div className="w-[167px] shrink-0 border-l border-[#d0d0d0]">
            <Basket title="Покупки:" row={['bbb0', '6', '0.06', '-12.8']} className="h-[174px]" />
            <Basket title="Продажи:" row={['bbs0', '29', '0.32', '-349.7']} className="pt-1" />
          </div>
          <div className="-mt-1 flex flex-1">
            <ProfitTable />
          </div>
        </div>
      </div>
      <ol className="-mr-[22px] grid h-[15px] grid-cols-[repeat(21,1fr)] text-[7px] leading-[10px] whitespace-nowrap text-[#e0e0e0]">
        {times.map((t) => (
          <li key={t} className="w-0">
            <i className="block h-[2px] w-px bg-[#d0d0d0]" />
            {t}
          </li>
        ))}
      </ol>
    </div>
    <div className="relative w-8 pt-3">
      <ol className="grid h-[422px] grid-rows-[repeat(18,1fr)] items-center text-[7px] leading-[9px]">
        {prices.map((p) => (
          <li key={p} className="flex items-center gap-0.5">
            <i className="h-px w-[2px] bg-white" />
            {p}
          </li>
        ))}
      </ol>
      <span className="absolute top-[74px] left-0 w-8 bg-white pl-1 text-[7px] leading-[7px] text-black">144.520</span>
    </div>
  </section>
);

const Terminal = () => (
  <section className="flex border-t border-[#b8b8b8] bg-[#f0f0f0]">
    <div className="flex w-[9px] shrink-0 flex-col items-center justify-between bg-linear-to-b from-[#eef2f6] to-[#9fbbd8] py-0.5">
      <button aria-label="Закрыть терминал"><X size={7} strokeWidth={4} /></button>
      <h2 className="rotate-180 text-[8px] leading-[9px] text-[#203a5c] [writing-mode:vertical-rl]">Терминал</h2>
    </div>
    <div className="min-w-0 flex-1">
      <div className="flex">
        <div className="min-w-0 flex-1">
          <div className="relative">
            <table className="h-[259px] w-full table-fixed border-collapse bg-white text-right">
              <thead>
                <tr className="h-[17px] bg-linear-to-b from-white to-[#f2f2f2]">
                  {orderColumns.map(([title, width], i) => (
                    <th key={i} className={`${width} pr-0.5 font-normal ${i === 0 ? 'pl-1 text-left' : ''}`}>
                      {title}
                      {i === 8 && <span className="mx-1.5 text-[#888]">∕</span>}
                    </th>
                  ))}
                </tr>
              </thead>
              <tbody>
                {orders.map((row, r) => {
                  const selected = r === 0;
                  return (
                    <tr
                      key={row[0]}
                      className={`border-t border-[#cfcfcf] leading-[9px] ${selected ? 'bg-[#3399fb] text-[#d4eaff]' : r % 2 ? 'bg-white' : 'bg-[#ebebeb]'}`}
                    >
                      {row.map((cell, c) => {
                        const hit = c === 7 && (r < 10 || r === 14 || r === 15);
                        return (
                          <td key={c} className={`border-r border-[#c8c8c8] pr-px ${hit ? 'bg-[#5cf25c] text-[#0c4a0c]' : ''}`}>
                            {c === 0 ? (
                              <span className="flex items-center gap-0.5 pl-0.5">
                                <DocIcon sell={row[2] === 'sell'} />
                                {cell}
                              </span>
                            ) : (
                              cell
                            )}
                          </td>
                        );
                      })}
                    </tr>
                  );
                })}
              </tbody>
            </table>
            <div className="absolute right-0 bottom-0 left-[530px] h-[100px] border-[3px] border-[#dc1830]" />
          </div>
          <div className="flex h-[15px] items-center bg-[#c8c8c8] font-bold">
            <span className="ml-[5px] size-1 border border-[#999]" />
            <p className="ml-[7px] whitespace-pre">Прибыль: 263.80  Кредит: 0.00  Депозит: 0.00  Снятие: 0.00</p>
            <span className="mr-[199px] ml-auto">263.80</span>
          </div>
        </div>
        <ScrollBar thumb="mt-[201px] h-14" />
      </div>
      <div className="mt-px flex h-[17px] items-start border-t border-black text-[#808080]">
        {['Торговля', 'Активы', 'История Счета', 'Новости|99', 'Алерты', 'Почта|12', 'Маркет|44', 'Сигналы', 'Библиотека', 'Эксперты', 'Журнал'].map((tab) => {
          const [name, count] = tab.split('|');
          return name === 'История Счета' ? (
            <button key={tab} className="h-[15px] border-x border-b border-black bg-white px-1.5 text-black">{name}</button>
          ) : (
            <button key={tab} className="mt-0.5 flex h-3 items-center border-r border-[#909090] px-[7px]">
              {name}
              {count && <span className="mt-1.5 text-[7px] font-semibold text-[#d02838]">{count}</span>}
            </button>
          );
        })}
      </div>
    </div>
  </section>
);

const StatusBar = () => (
  <footer className="flex h-5 items-center border-t border-[#c0c0c0] bg-[#f0f0f0] pl-px whitespace-nowrap">
    <p className="flex-1">Для вызова справки нажмите F1</p>
    <p className="w-[82px] border-l border-[#bbb] pl-1">Default</p>
    <span className="h-3 w-[73px] border-l border-[#bbb]" />
    <span className="h-3 w-[50px] border-l border-[#bbb]" />
    <span className="h-3 w-[51px] border-l border-[#bbb]" />
    <span className="h-3 w-12 border-l border-[#bbb]" />
    <span className="h-3 w-[50px] border-l border-[#bbb]" />
    <span className="h-3 w-[47px] border-l border-[#bbb]" />
    <p className="flex w-[105px] items-center gap-[3px] border-l border-[#bbb] pl-[3px]">
      <svg width="17" height="10" viewBox="0 0 17 10">
        <rect width="17" height="10" fill="#2c5a34" />
        <path d="M1.500 1v8M4.500 1v8M7.500 3v6M10.500 5v4M13.500 6v3" stroke="#c6e860" strokeWidth="1.500" />
      </svg>
      229094/373 kb
    </p>
  </footer>
);

export default function App() {
  return (
    <div className="flex min-h-screen flex-col bg-[#4a6486] font-['Open_Sans',sans-serif] text-[8px] leading-[10px] text-black">
      <TitleBar />
      <div className="bg-linear-to-b from-[#8fb0d2] via-[#5b7796] to-[#4a6486] px-1.5">
        <MenuBar />
        <Toolbar />
        <main className="flex bg-[#f0f0f0]">
          <aside className="w-[251px] shrink-0 border-r border-[#a8a8a8] pt-px pl-0.5">
            <MarketWatch />
            <Navigator />
          </aside>
          <div className="ml-[3px] min-w-0 flex-1">
            <Chart />
            <div className="flex items-start justify-between">
              <Tabs items={['GBPJPY,H1', 'AUDJPY,M5', 'EURJPY,M5']} active={0} />
              <span className="mt-1 mr-1.5 flex gap-2 text-[#666]"><button>‹</button><button>›</button></span>
            </div>
          </div>
        </main>
        <div className="bg-[#f0f0f0] pr-[3px] pl-0.5">
          <Terminal />
        </div>
        <StatusBar />
      </div>
      <div className="flex-1 bg-linear-to-r from-[#1c2a3a] to-[#4a6c96]" />
    </div>
  );
}
